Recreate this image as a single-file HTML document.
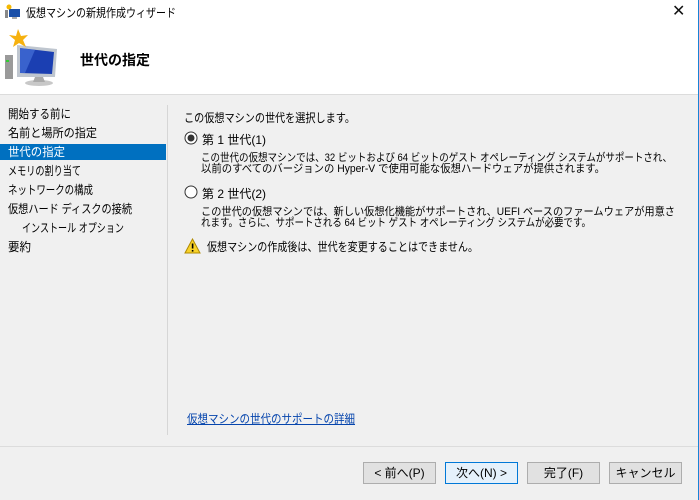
<!DOCTYPE html>
<html><head><meta charset="utf-8"><style>
*{margin:0;padding:0;box-sizing:border-box}
body{width:699px;height:500px;overflow:hidden;background:#f0f0f0;font-family:"Liberation Sans","Noto Sans CJK JP",sans-serif;font-size:12px;color:#000;position:relative}
.abs{position:absolute;white-space:nowrap}
.fit{transform-origin:0 0}
#title{left:0;top:0;width:699px;height:24px;background:#fff}
#hdr{left:0;top:24px;width:699px;height:71px;background:#fff;border-bottom:1px solid #dcdcdc}
.nav{left:8px;font-size:12px;line-height:15px}
.btn{top:462px;height:22px;width:73px;border:1px solid #adadad;background:#e1e1e1;text-align:center;line-height:20px;font-size:12px}
.desc{left:201px;font-size:11px;line-height:11px}
</style></head><body>
<div id="title" class="abs">
<svg class="abs" style="left:5px;top:4px" width="16" height="16"><rect x="0" y="6" width="3" height="8" fill="#888"/><rect x="4" y="5" width="11" height="8" fill="#1a4fa8"/><rect x="7" y="13" width="5" height="2" fill="#aaa"/><circle cx="4" cy="3" r="2.5" fill="#f5b800"/></svg>
<div class="abs fit" style="left:26px;top:4px;--w:150">仮想マシンの新規作成ウィザード</div>
<div class="abs" style="left:672px;top:1px;font-size:16px;color:#111">✕</div>
</div>
<div id="hdr" class="abs">
<svg class="abs" style="left:3px;top:3px" width="60" height="60" viewBox="0 0 60 60">
<rect x="2" y="28" width="8" height="24" fill="#9a9a9a"/><rect x="3" y="33" width="3" height="2" fill="#3c3"/>
<path d="M14 18 L54 22 L52 50 L14 50 Z" fill="#bfc6cf"/>
<path d="M17 21 L51 25 L49 47 L17 46 Z" fill="#1b3fb2"/>
<path d="M17 21 L32 23 L22 46 L17 46Z" fill="#4f7ae0" opacity=".6"/>
<ellipse cx="36" cy="56" rx="14" ry="3" fill="#c8c8c8"/>
<path d="M32 50 L40 50 L42 55 L30 55Z" fill="#aaa"/>
<polygon points="15,2 18,9 25,8 20,13 23,20 16,16 10,20 12,13 6,8 13,9" fill="#f6b10e"/>
</svg>
<div class="abs" style="left:80px;top:26px;font-size:14px;font-weight:bold">世代の指定</div>
</div>
<div class="abs" style="left:167px;top:105px;width:1px;height:330px;background:#d6d6d6"></div>
<div class="abs" style="left:0;top:144px;width:166px;height:16px;background:#0070c0"></div>
<div class="abs nav fit" style="top:107px;--w:63">開始する前に</div>
<div class="abs nav fit" style="top:126px;--w:89">名前と場所の指定</div>
<div class="abs nav fit" style="top:145px;color:#fff;--w:57">世代の指定</div>
<div class="abs nav fit" style="top:164px;--w:73">メモリの割り当て</div>
<div class="abs nav fit" style="top:183px;--w:85">ネットワークの構成</div>
<div class="abs nav fit" style="top:202px;--w:124">仮想ハード ディスクの接続</div>
<div class="abs nav fit" style="top:221px;left:22px;--w:102">インストール オプション</div>
<div class="abs nav fit" style="top:240px;--w:23">要約</div>

<div class="abs fit" style="left:184px;top:109px;--w:171">この仮想マシンの世代を選択します。</div>
<svg class="abs" style="left:184px;top:131px" width="14" height="14"><circle cx="7" cy="7" r="6" fill="#fff" stroke="#333"/><circle cx="7" cy="7" r="3.5" fill="#333"/></svg>
<div class="abs fit" style="left:202px;top:131px;--w:64">第 1 世代(1)</div>
<div class="abs desc fit" style="top:153px;--w:471">この世代の仮想マシンでは、32 ビットおよび 64 ビットのゲスト オペレーティング システムがサポートされ、</div>
<div class="abs desc fit" style="top:164px;--w:404">以前のすべてのバージョンの Hyper-V で使用可能な仮想ハードウェアが提供されます。</div>
<svg class="abs" style="left:184px;top:185px" width="14" height="14"><circle cx="7" cy="7" r="6" fill="#fff" stroke="#333"/></svg>
<div class="abs fit" style="left:202px;top:185px;--w:64">第 2 世代(2)</div>
<div class="abs desc fit" style="top:207px;--w:474">この世代の仮想マシンでは、新しい仮想化機能がサポートされ、UEFI ベースのファームウェアが用意さ</div>
<div class="abs desc fit" style="top:218px;--w:390">れます。さらに、サポートされる 64 ビット ゲスト オペレーティング システムが必要です。</div>
<svg class="abs" style="left:184px;top:238px" width="17" height="16"><path d="M8.5 1 L16 15 L1 15 Z" fill="#f8d22a" stroke="#b08a00"/><rect x="7.8" y="5.5" width="1.6" height="5" fill="#000"/><rect x="7.8" y="12" width="1.6" height="1.6" fill="#000"/></svg>
<div class="abs fit" style="left:207px;top:238px;--w:271">仮想マシンの作成後は、世代を変更することはできません。</div>
<div class="abs fit" style="left:187px;top:410px;color:#0645ad;text-decoration:underline;--w:168">仮想マシンの世代のサポートの詳細</div>

<div class="abs" style="left:0;top:446px;width:699px;height:1px;background:#dcdcdc"></div>
<div class="abs btn" style="left:363px">&lt; 前へ(P)</div>
<div class="abs btn" style="left:445px;border-color:#0078d7;background:#e5f1fb">次へ(N) &gt;</div>
<div class="abs btn" style="left:527px">完了(F)</div>
<div class="abs btn" style="left:609px">キャンセル</div>
<div class="abs" style="left:698px;top:0;width:1px;height:500px;background:#1883d7"></div>
<script>
document.querySelectorAll('.fit').forEach(function(e){
var w=parseFloat(getComputedStyle(e).getPropertyValue('--w'));
var a=e.getBoundingClientRect().width;
if(w&&a)e.style.transform='scaleX('+(w/a)+')';
});
</script>
</body></html>
